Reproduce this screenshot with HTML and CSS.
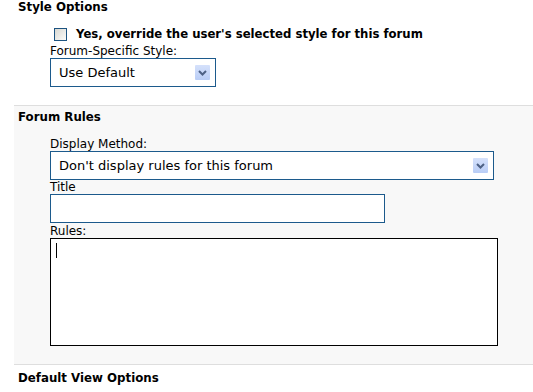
FILE: index.html
```html
<!DOCTYPE html>
<html>
<head>
    <title>Forum Options</title>
    <link rel="stylesheet" href="styles.css">
</head>
<body>
    <div class="section section-first">
        <div class="section-title">Style Options</div>
        <div class="section-body">
            <label class="check-row">
                <span class="checkbox"></span>
                <span class="check-label">Yes, override the user's selected style for this forum</span>
            </label>
            <div class="field-label label-gap">Forum-Specific Style:</div>
            <div class="select select-short">
                <span class="select-text">Use Default</span>
                <span class="select-arrow">
                    <svg width="9" height="6" viewBox="0 0 9 6"><path d="M1 1 L4.5 4.5 L8 1" fill="none" stroke="#4d6185" stroke-width="2"/></svg>
                </span>
            </div>
        </div>
    </div>

    <div class="section section-alt">
        <div class="section-title">Forum Rules</div>
        <div class="section-body">
            <div class="field-label">Display Method:</div>
            <div class="select select-wide">
                <span class="select-text">Don't display rules for this forum</span>
                <span class="select-arrow">
                    <svg width="9" height="6" viewBox="0 0 9 6"><path d="M1 1 L4.5 4.5 L8 1" fill="none" stroke="#4d6185" stroke-width="2"/></svg>
                </span>
            </div>
            <div class="field-label">Title</div>
            <div class="text-input"></div>
            <div class="field-label label-gap-small">Rules:</div>
            <div class="textarea"><span class="caret"></span></div>
        </div>
    </div>

    <div class="section section-last">
        <div class="section-title">Default View Options</div>
    </div>
</body>
</html>
```

FILE: styles.css
```css
body {
    margin: 0;
    background-color: #fff;
    font-family: "DejaVu Sans", Verdana, sans-serif;
    font-size: 12px;
    color: #000;
}

.section {
    margin-left: 14px;
    padding: 0 0 0 4px;
}

.section + .section {
    border-top: 1px solid #dedede;
}

.section-alt {
    background-color: #f8f8f8;
}

.section-title {
    font-weight: bold;
    font-size: 11.8px;
    line-height: 14px;
}

.section-alt .section-title {
    padding-top: 4px;
}

.section-last .section-title {
    padding-top: 6px;
}

.section-body {
    padding: 13px 0 18px 32px;
}

.check-row {
    display: flex;
    align-items: center;
    gap: 9px;
    margin-left: 4px;
    height: 14px;
}

.checkbox {
    width: 11px;
    height: 11px;
    border: 1px solid #1c5380;
    background: linear-gradient(135deg, #d8d8d2, #fbfbf9);
}

.check-label {
    font-weight: bold;
    font-size: 11.7px;
}

.field-label {
    line-height: 14px;
    height: 14px;
}

.label-gap {
    margin-top: 3px;
}

.label-gap-small {
    margin-top: 1px;
}

.select {
    display: flex;
    align-items: center;
    justify-content: space-between;
    box-sizing: border-box;
    height: 29px;
    border: 1px solid #1c5a8c;
    background-color: #fff;
    padding: 0 5px 0 8px;
    font-size: 13px;
}

.select-short {
    width: 166px;
}

.select-wide {
    width: 444px;
}

.select-arrow {
    display: flex;
    align-items: center;
    justify-content: center;
    width: 15px;
    height: 15px;
    background: linear-gradient(#d5e1fb, #b9cdf6);
    border-radius: 1px;
}

.text-input {
    box-sizing: border-box;
    width: 335px;
    height: 29px;
    border: 1px solid #1c5a8c;
    background-color: #fff;
}

.textarea {
    box-sizing: border-box;
    width: 448px;
    height: 108px;
    border: 1px solid #000;
    background-color: #fff;
    padding: 4px 0 0 5px;
}

.caret {
    display: block;
    width: 1px;
    height: 15px;
    background-color: #000;
}
```
